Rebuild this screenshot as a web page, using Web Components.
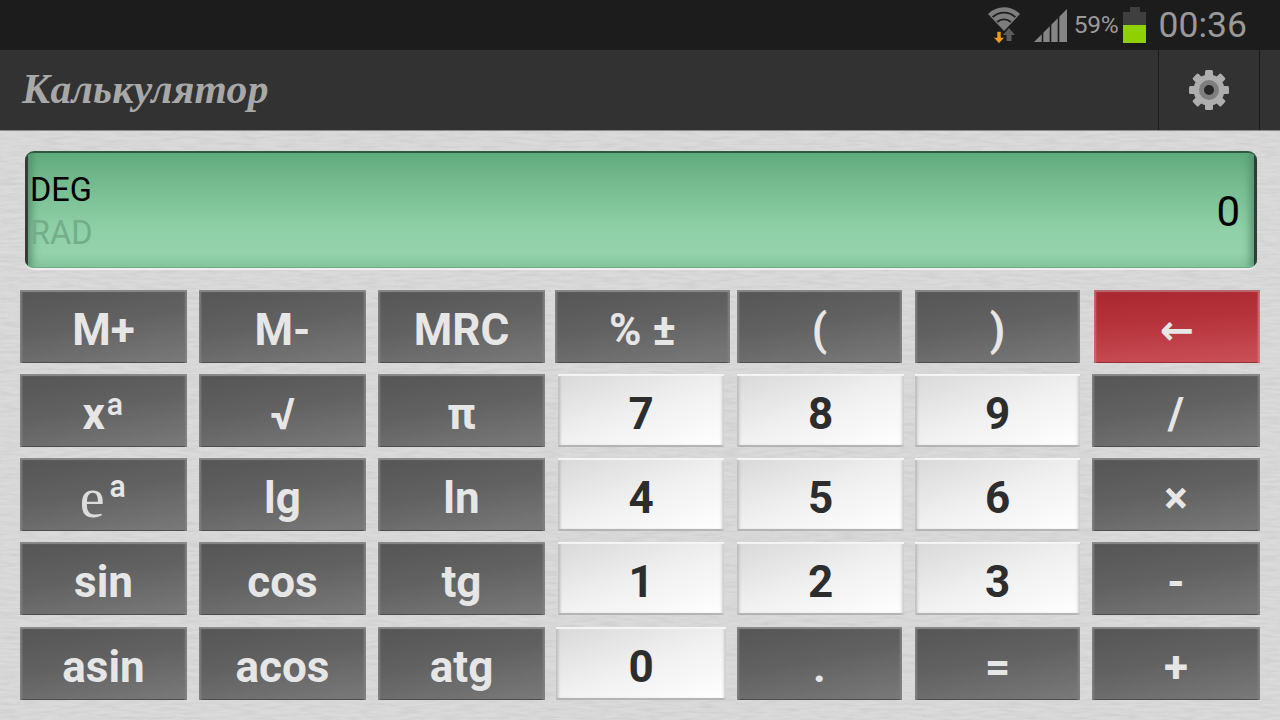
<!DOCTYPE html>
<html lang="ru"><head><meta charset="utf-8"><title>Калькулятор</title>
<style>
html,body{margin:0;padding:0;width:1280px;height:720px;overflow:hidden;background:#dcdcdc;font-family:Roboto,"Liberation Sans",sans-serif}
calc-app{display:block}
</style></head><body>
<calc-app>
  <status-bar></status-bar>
  <action-bar>Калькулятор</action-bar>
  <lcd-display value="0"></lcd-display>
  <key-pad></key-pad>
</calc-app>
<script>
const def=(name,css,html,init)=>{customElements.define(name,class extends HTMLElement{
  constructor(){super();this.attachShadow({mode:'open'}).innerHTML=`<style>${css}</style>${html}`;}
  connectedCallback(){init&&init(this);}
});};
const paper="data:image/svg+xml,"+encodeURIComponent(`<svg xmlns='http://www.w3.org/2000/svg' width='1280' height='720'><filter id='n' x='0' y='0' width='100%' height='100%'><feTurbulence type='fractalNoise' baseFrequency='0.05 0.35' numOctaves='4' seed='7'/><feColorMatrix values='0 0 0 0 .5  0 0 0 0 .5  0 0 0 0 .5  .7 0 0 0 -.25'/></filter><rect width='1280' height='720' fill='#dadada'/><rect width='1280' height='720' filter='url(#n)'/></svg>`);

def('calc-app',`:host{display:block;width:1280px;height:720px;overflow:hidden;background:#dcdcdc url("${paper}")}`,`<slot></slot>`);

def('status-bar',`
:host{display:flex;height:50px;background:#1c1c1c;color:#9a9a9a;align-items:center;justify-content:flex-end;box-sizing:border-box;padding-right:33px}
svg{display:block;flex:none}
.pct{font:400 24.500px/50px Roboto,sans-serif;margin:0 4px 0 6px;letter-spacing:-.2px;padding-bottom:1px}
.time{font:400 35.500px/50px Roboto,sans-serif;margin-left:12px;color:#999;padding-bottom:1px}
.wifi{margin-right:13px}
`,`
<svg class="wifi" width="34" height="40" viewBox="0 0 34 40" style="margin-top:-1px">
  <path d="M1 9 C 10 0,24 0,33 9 L17 26 Z" fill="#7d7d7d"/>
  <path d="M5.6 12.2 C 12 6,22 6,28.400 12.200" fill="none" stroke="#1c1c1c" stroke-width="1.800"/>
  <path d="M10.200 17 C 14 13.500,20 13.500,23.800 17" fill="none" stroke="#1c1c1c" stroke-width="1.800"/>
  <path d="M22 23 L28 30 H24.500 V36 H19.500 V30 H16 Z" fill="#5c5c5c"/>
  <path d="M10 26.500 H14 V32.500 H17.500 L12 38.500 L6.500 32.500 H10 Z" fill="#f39a1e" stroke="#1c1c1c" stroke-width=".6"/>
</svg>
<svg width="34" height="34" viewBox="0 0 34 34" style="margin-top:1px">
  <path d="M0 33 L33 0 V33 Z" fill="#858585"/>
  <path d="M8.500 33 V22 M16.500 33 V14 M24.500 33 V6" stroke="#1c1c1c" stroke-width="1.600"/>
</svg>
<span class="pct">59%</span>
<svg width="24" height="36" viewBox="0 0 24 36" style="margin-top:-1px">
  <rect x="7" y="0" width="10" height="6" fill="#3f3f3f"/>
  <rect x="0" y="5" width="23" height="13" fill="#3f3f3f"/>
  <rect x="0" y="18" width="23" height="18" fill="#8fd100"/>
</svg>
<span class="time">00:36</span>`);

def('action-bar',`
:host{display:flex;height:81px;background:#323232;box-sizing:border-box;border-bottom:1px solid #8a8a8a;align-items:stretch}
.title{flex:1;padding-left:22px;font:italic 700 41.500px/78px "Liberation Serif",serif;color:#a8a8a8;letter-spacing:.3px}
.btn{width:100px;border-left:1px solid #1b1b1b;border-right:1px solid #1b1b1b;display:flex;align-items:center;justify-content:center}
.end{width:20px}
`,`
<div class="title"><slot></slot></div>
<div class="btn"><svg width="42" height="42" viewBox="-21 -21 42 42">
  <g fill="#adadad">
    <circle r="15.500"/>
    <rect x="-4" y="-20" width="8" height="9" rx="1.500"/>
    <rect x="-4" y="-20" width="8" height="9" rx="1.500" transform="rotate(45)"/>
    <rect x="-4" y="-20" width="8" height="9" rx="1.500" transform="rotate(90)"/>
    <rect x="-4" y="-20" width="8" height="9" rx="1.500" transform="rotate(135)"/>
    <rect x="-4" y="-20" width="8" height="9" rx="1.500" transform="rotate(180)"/>
    <rect x="-4" y="-20" width="8" height="9" rx="1.500" transform="rotate(225)"/>
    <rect x="-4" y="-20" width="8" height="9" rx="1.500" transform="rotate(270)"/>
    <rect x="-4" y="-20" width="8" height="9" rx="1.500" transform="rotate(315)"/>
  </g>
  <circle r="10" fill="#7e7e7e"/><circle r="5" fill="#262626"/>
</svg></div>
<div class="end"></div>`);

def('lcd-display',`
:host{display:block;padding:20px 23px 0 25px;height:138px;box-sizing:border-box;--edge:#343c37}
.wrap{box-shadow:0 2px 0 #efefef;border-radius:9px}
.lcd{position:relative;height:117px;box-sizing:border-box;border-radius:9px 9px 8px 8px;overflow:hidden;
 background:linear-gradient(180deg,#5fab7c 0,#77bd91 30%,#90d0a8 68%,#93d2aa 88%,#84c49c 100%);
 border-top:2px solid #2f5a42;border-bottom:1px solid #6fa986;
 display:flex;justify-content:space-between;align-items:center;padding:0 17px 0 5px;color:#000}
.lcd::before,.lcd::after{content:"";position:absolute;top:-1px;bottom:-1px;width:3px;background:var(--edge);box-shadow:0 0 8px 3px #4f8a68}
.lcd::before{left:0}.lcd::after{right:0}
.modes{font:400 32.500px/43px Roboto,sans-serif;margin-top:3px;position:relative}
.off{color:#73ad8a}
.val{font:400 42px/48px Roboto,sans-serif;margin-top:3px}
`,`<div class="wrap"><div class="lcd"><div class="modes"><div>DEG</div><div class="off">RAD</div></div><div class="val" id="v"></div></div></div>`,
el=>{el.shadowRoot.getElementById('v').textContent=el.getAttribute('value');});

def('calc-key',`
:host{display:flex;box-sizing:border-box;font:700 44px/1 Roboto,"Liberation Sans",sans-serif;color:#e6e6e6;
 background:linear-gradient(170deg,#555 0,#616161 45%,#7a7a7a 100%);
 box-shadow:inset 0 2px 1px #8a8a8a,inset 3px 0 2px -1px #808080,inset -3px 0 2px -1px #808080,inset 0 -1px 0 #474747;
 align-items:center;justify-content:center;padding-top:7px;white-space:nowrap}
:host([kind=digit]){color:#2d2d2d;background:linear-gradient(160deg,#d8d8d8 0,#f0f0f0 50%,#fff 100%);
 box-shadow:inset 0 2px 1px #f6f6f6,inset 3px 0 3px -1px #b8b8b8,inset -3px 0 3px -1px #c8c8c8,inset 0 -2px 1px #b0b0b0}
:host([kind=danger]){background:linear-gradient(176deg,#a9272f 0,#b5323a 40%,#cb5058 100%);
 box-shadow:inset 0 2px 1px #bb6a6f,inset 3px 0 2px -1px #c96b72,inset -3px 0 2px -1px #d27a80,inset 0 -1px 0 #8f2a30}
`,`<slot></slot>`);

const rows=[
 [[20,167],[12,167],[12,167],[10,175],[7,165],[13,165],[14,166]],
 [[20,167],[12,167],[12,167],[13,166],[13,167],[11,165],[12,168]],
 [[20,167],[12,167],[12,167],[13,166],[13,167],[11,165],[12,168]],
 [[20,167],[12,167],[12,167],[13,166],[13,167],[11,165],[12,168]],
 [[20,167],[12,167],[12,167],[11,170],[11,165],[13,165],[12,168]],
];
const E='<span style="font:400 56px/30px \'Liberation Serif\',serif;color:#dcdcdc;margin-right:3px">e</span><span style="font:700 44px/1 Roboto,sans-serif;margin-top:-5px">ª</span>';
const ARROW='<span style="font:700 41px/1 \'DejaVu Sans\',sans-serif">←</span>';
const labels=[
 [['M+'],['M-'],['MRC'],['% ±'],['('],[')'],[ARROW,'danger']],
 [['xª'],['√'],['π'],['7','digit'],['8','digit'],['9','digit'],['/']],
 [[E],['lg'],['ln'],['4','digit'],['5','digit'],['6','digit'],['×']],
 [['sin'],['cos'],['tg'],['1','digit'],['2','digit'],['3','digit'],['-']],
 [['asin'],['acos'],['atg'],['0','digit'],['.'],['='],['+']],
];
def('key-pad',`:host{display:flex;flex-direction:column;padding-top:21px;box-sizing:border-box}
.row{display:flex;height:73px;margin-bottom:11px}
.row:nth-of-type(4){margin-bottom:12px}
`,'',el=>{
  const sr=el.shadowRoot;
  if(sr.querySelector('.row'))return;
  labels.forEach((keys,r)=>{
    const row=document.createElement('div');row.className='row';
    keys.forEach((k,i)=>{
      const b=document.createElement('calc-key');
      b.innerHTML=k[0];if(k[1])b.setAttribute('kind',k[1]);
      b.style.width=rows[r][i][1]+'px';b.style.marginLeft=rows[r][i][0]+'px';
      row.appendChild(b);
    });
    sr.appendChild(row);
  });
});
</script>
</body></html>
